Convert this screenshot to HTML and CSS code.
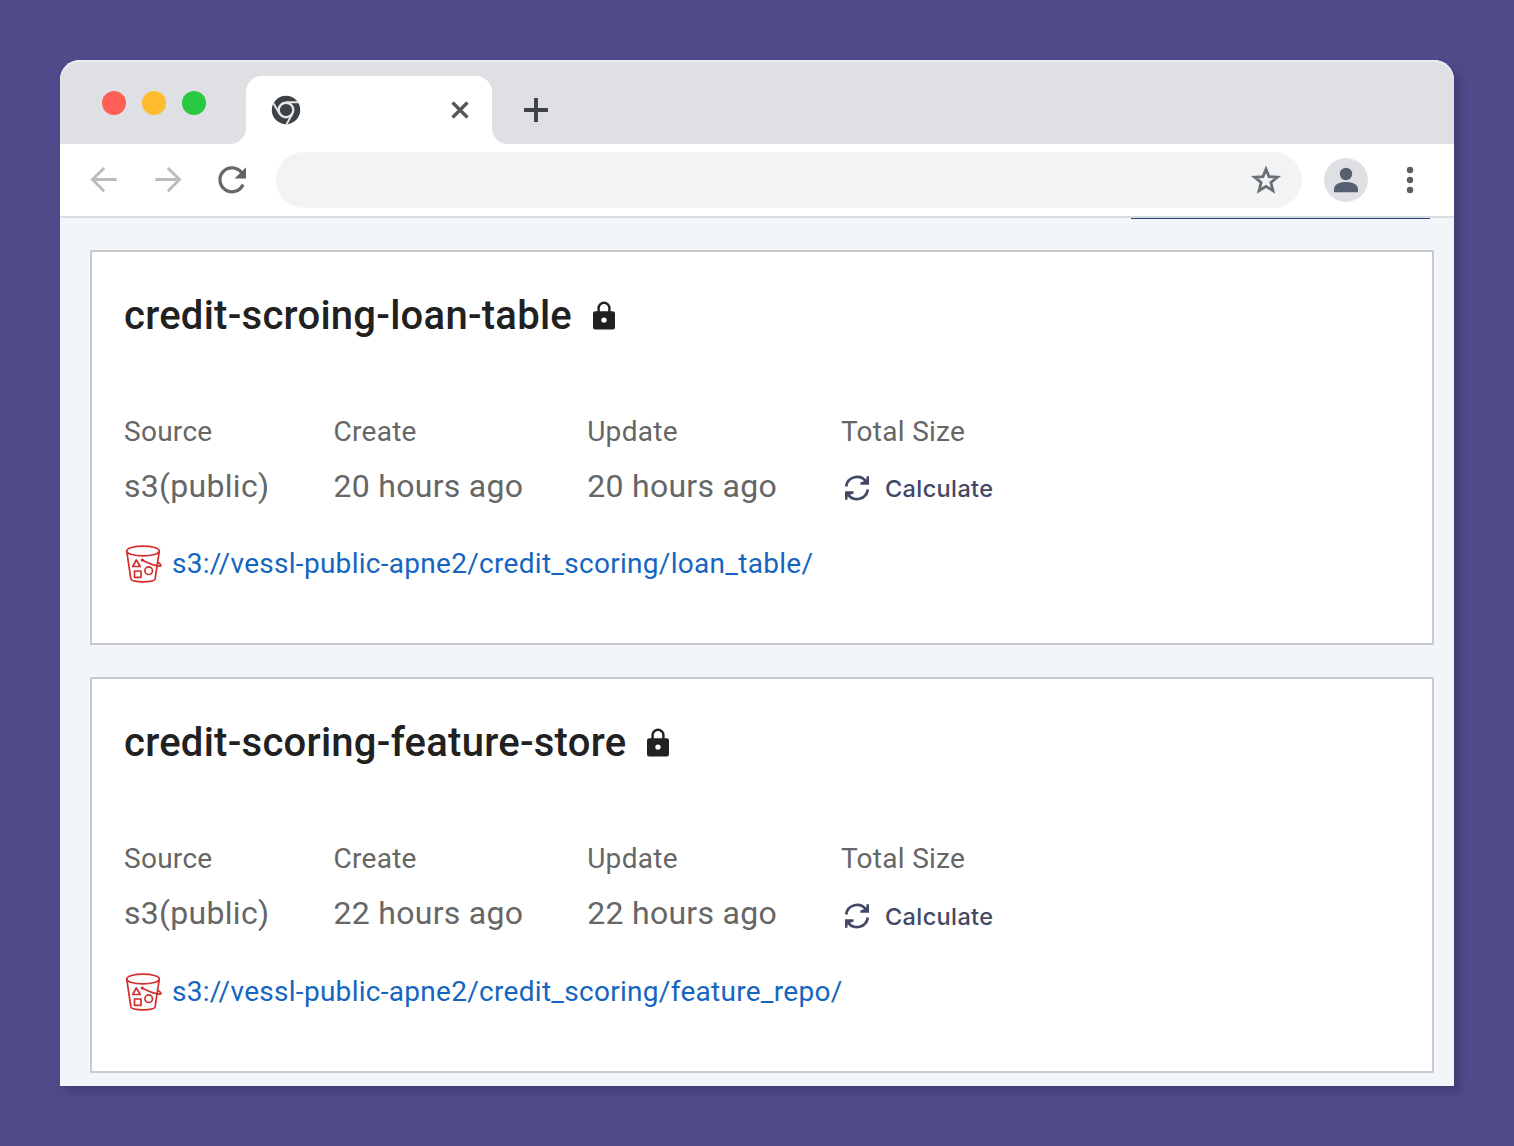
FILE: index.html
```html
<!DOCTYPE html>
<html lang="en">
<head>
<meta charset="utf-8">
<title>Datasets</title>
<link rel="stylesheet" href="styles.css">
</head>
<body>
<svg class="defs" width="0" height="0" aria-hidden="true">
  <symbol id="lock" viewBox="0 0 24 30">
    <path d="M6.600 12V7.200a5.400 5.400 0 0 1 10.800 0V12" fill="none" stroke="currentColor" stroke-width="2.400"/>
    <path fill="currentColor" fill-rule="evenodd" d="M3.200 10.200h17.600a2.200 2.200 0 0 1 2.200 2.200v13.800a2.200 2.200 0 0 1-2.200 2.200H3.200a2.200 2.200 0 0 1-2.200-2.200V12.400a2.200 2.200 0 0 1 2.200-2.200zM12 16.400a2.700 2.700 0 1 0 0 5.400a2.700 2.700 0 0 0 0-5.400z"/>
  </symbol>
  <symbol id="sync" viewBox="0 0 26 26">
    <g fill="none" stroke="currentColor" stroke-width="2.700">
      <path d="M2.200 11.500A11 11 0 0 1 22 6.500"/>
      <path d="M23.800 14.500A11 11 0 0 1 4 19.500"/>
    </g>
    <path fill="currentColor" d="M25 1.200v8.600h-8.600v-2.200l4-1.600L22.500 4V1.200zM1 24.800v-8.600h8.600v2.200l-4 1.600L3.500 22v2.800z"/>
  </symbol>
  <symbol id="bucket" viewBox="0 0 40 40">
    <g fill="none" stroke="currentColor" stroke-width="1.700" stroke-linejoin="round">
      <ellipse cx="19" cy="7" rx="16.300" ry="4.900"/>
      <path d="M2.700 7l4.200 28c1 3.700 23.200 3.700 24.200 0L35.300 7"/>
      <path d="M18.500 16.300c7 3.500 14 6 17.500 5.800c2-.3.500-2.300-2.500-3.800"/>
      <path d="M12.300 16l4 6.500H8.700z"/>
      <path d="M10.500 27h6.500v6.300h-6.500z"/>
      <circle cx="24.700" cy="26.700" r="3.800"/>
    </g>
    <circle cx="18.300" cy="16" r="1.600" fill="currentColor"/>
  </symbol>
</svg>
<div class="window">
  <header class="tabs">
    <div class="lights"><i class="light red"></i><i class="light yellow"></i><i class="light green"></i></div>
    <div class="tab">
      <svg width="30" height="30" viewBox="0 0 30 30">
        <circle cx="15" cy="15" r="14.200" fill="#3c4245"/>
        <circle cx="15" cy="15" r="7.300" fill="none" stroke="#e4e5e5" stroke-width="2.400"/>
        <path d="M15 7.300h12.800M8.500 18.800L2.200 8M21.500 18.800L15.500 29.300" fill="none" stroke="#e4e5e5" stroke-width="1.900"/>
      </svg>
      <svg width="20" height="20" viewBox="0 0 20 20"><path d="M2.500 2.500l15 15M17.500 2.500l-15 15" stroke="#55585b" stroke-width="3.300"/></svg>
    </div>
    <svg class="plus" width="26" height="26" viewBox="0 0 26 26"><path d="M13 1v24M1 13h24" stroke="#3f4347" stroke-width="3.900"/></svg>
  </header>
  <nav class="toolbar">
    <svg width="28" height="28" viewBox="0 0 28 28"><path d="M26.700 13.500H3M14.200 2L2.500 13.500l11.700 11.700" fill="none" stroke="#babcbe" stroke-width="2.900"/></svg>
    <svg class="forward" width="28" height="28" viewBox="0 0 28 28"><path d="M1.300 13.500H25M13.800 2l11.700 11.500l-11.700 11.700" fill="none" stroke="#babcbe" stroke-width="2.900"/></svg>
    <svg class="reload" width="30" height="30" viewBox="0 0 30 30"><path d="M24.500 7.500A12 12 0 1 0 26 19.500" fill="none" stroke="#65686c" stroke-width="3.300"/><path d="M29 2.200v11.300H17.500z" fill="#606367"/></svg>
    <div class="address"><svg width="30" height="30" viewBox="0 0 30 30"><path d="M15 4.200l3 7.400l8.400.6l-6.500 5.300l2.100 8.300L15 21.400l-7 4.400l2.100-8.300l-6.500-5.300l8.400-.6z" fill="none" stroke="#6c6f72" stroke-width="2.800"/></svg></div>
    <svg class="avatar" width="44" height="44" viewBox="0 0 44 44"><circle cx="22" cy="22" r="22" fill="#dee0e4"/><circle cx="22" cy="16" r="6.200" fill="#566071"/><path d="M10 34.200V31c0-4.500 5.500-7 12-7s12 2.500 12 7v3.200z" fill="#566071"/></svg>
    <svg class="more" width="8" height="28" viewBox="0 0 8 28"><g fill="#5b5e62"><circle cx="4" cy="4" r="3.200"/><circle cx="4" cy="14" r="3.200"/><circle cx="4" cy="24" r="3.200"/></g></svg>
  </nav>
  <main class="page">
    <div class="button-edge"></div>
    <section class="card">
      <h2 class="title"><span>credit-scroing-loan-table</span><svg class="lock"><use href="#lock"/></svg></h2>
      <dl class="facts">
        <div><dt>Source</dt><dd>s3(public)</dd></div>
        <div><dt>Create</dt><dd>20 hours ago</dd></div>
        <div><dt>Update</dt><dd>20 hours ago</dd></div>
        <div><dt>Total Size</dt><dd class="calculate"><svg class="sync"><use href="#sync"/></svg><span>Calculate</span></dd></div>
      </dl>
      <div class="path"><svg class="bucket"><use href="#bucket"/></svg><a>s3://vessl-public-apne2/credit_scoring/loan_table/</a></div>
    </section>
    <section class="card second">
      <h2 class="title"><span>credit-scoring-feature-store</span><svg class="lock"><use href="#lock"/></svg></h2>
      <dl class="facts">
        <div><dt>Source</dt><dd>s3(public)</dd></div>
        <div><dt>Create</dt><dd>22 hours ago</dd></div>
        <div><dt>Update</dt><dd>22 hours ago</dd></div>
        <div><dt>Total Size</dt><dd class="calculate"><svg class="sync"><use href="#sync"/></svg><span>Calculate</span></dd></div>
      </dl>
      <div class="path"><svg class="bucket"><use href="#bucket"/></svg><a>s3://vessl-public-apne2/credit_scoring/feature_repo/</a></div>
    </section>
  </main>
</div>
</body>
</html>
```
FILE: styles.css
```css
* { box-sizing: border-box; }
body { margin: 0; padding: 60px; height: 1146px; background: #504a8b; font-family: Roboto, "Liberation Sans", sans-serif; overflow: hidden; }
svg { display: block; flex: none; }
.defs { display: none; }
.window { width: 1394px; height: 1026px; border-radius: 20px 20px 0 0; background: #f2f6fb; box-shadow: 6px 6px 8px rgba(45, 45, 80, .4); }
.tabs { display: flex; height: 84px; padding: 16px 0 0 42px; background: #dfe0e4; border-radius: 20px 20px 0 0; box-shadow: inset 0 2px 1px #eaebee; }
.lights { display: flex; gap: 16px; width: 144px; padding-top: 15px; }
.light { width: 24px; height: 24px; border-radius: 50%; }
.red { background: #ff5f57; }
.yellow { background: #febc2e; }
.green { background: #28c840; }
.tab { position: relative; display: flex; align-items: center; justify-content: space-between; width: 246px; height: 68px; padding: 0 22px 0 25px; background: #fff; border-radius: 16px 16px 0 0; }
.tab::before, .tab::after { content: ""; position: absolute; bottom: 0; width: 16px; height: 16px; }
.tab::before { right: 100%; background: radial-gradient(circle at 0 0, transparent 15.5px, #fff 16.5px); }
.tab::after { left: 100%; background: radial-gradient(circle at 100% 0, transparent 15.5px, #fff 16.5px); }
.plus { margin: 21px 0 0 31px; }
.toolbar { display: flex; align-items: center; height: 74px; padding-left: 30px; background: #fff; border-bottom: 2px solid #dadcde; }
.forward { margin-left: 36px; }
.reload { margin-left: 35px; }
.address { display: flex; align-items: center; justify-content: flex-end; width: 1026px; height: 56px; margin-left: 29px; padding-right: 21px; border-radius: 28px; background: #f1f3f4; }
.avatar { margin-left: 22px; }
.more { margin-left: 38px; }
.page { height: 868px; padding: 0 20px 0 30px; }
.button-edge { width: 299px; height: 1px; margin: 0 4px 31px auto; background: #24427c; }
.card { height: 395px; padding: 40px 32px 0; border: 2px solid #c9cacc; border-radius: 1px; background: #fff; color: #666; }
.second { height: 396px; margin-top: 32px; }
.title { display: flex; align-items: center; gap: 20px; height: 48px; margin: 0; color: #212121; font-size: 40px; font-weight: 500; line-height: 48px; letter-spacing: .26px; }
.lock { width: 24px; height: 30px; }
.facts { display: grid; grid-template-columns: 209.5px 253.7px 253.8px 1fr; margin: 72px 0 0; }
.facts dt { height: 40px; font-size: 28px; line-height: 40px; letter-spacing: .28px; }
.facts dd { height: 48px; margin: 10px 0 0; font-size: 32px; line-height: 48px; letter-spacing: .29px; }
.facts .calculate { display: flex; align-items: center; gap: 15px; padding: 4px 0 0 3px; color: #424866; font-family: Inter, Roboto, sans-serif; font-size: 23.5px; font-weight: 500; letter-spacing: .38px; }
.calculate span { padding-top: 2px; }
.second .calculate { padding-top: 6px; }
.sync { width: 26px; height: 26px; }
.path { display: flex; align-items: center; gap: 8px; height: 40px; margin-top: 34px; font-size: 28px; line-height: 40px; letter-spacing: .29px; color: #1565c0; white-space: nowrap; }
.second .path { margin-top: 35px; }
.bucket { width: 40px; height: 40px; color: #d32f2f; }
```
